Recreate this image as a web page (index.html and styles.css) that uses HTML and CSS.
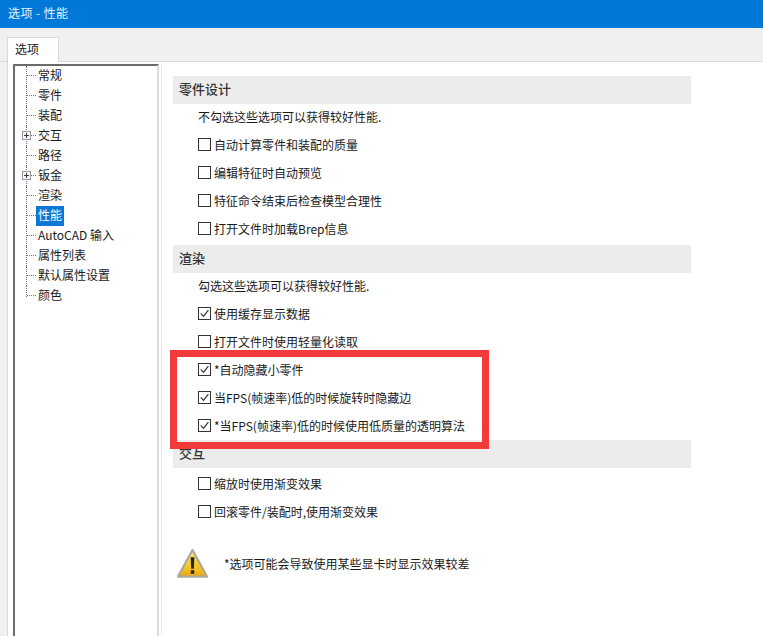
FILE: index.html
```html
<!DOCTYPE html>
<html lang="zh-CN">
<head>
    <meta charset="UTF-8">
    <title>选项 - 性能</title>
    <link rel="stylesheet" href="styles.css">
</head>
<body>
    <div class="titlebar">选项 - 性能</div>

    <div class="tab-strip">
        <div class="tab">选项</div>
    </div>

    <div class="tab-body">
        <!-- Tree -->
        <div class="tree">
            <div class="tree-lines">
                <div class="tree-item"><span class="twig"></span><span class="tree-label">常规</span></div>
                <div class="tree-item"><span class="twig"></span><span class="tree-label">零件</span></div>
                <div class="tree-item"><span class="twig"></span><span class="tree-label">装配</span></div>
                <div class="tree-item"><span class="twig"></span><span class="plus"></span><span class="tree-label">交互</span></div>
                <div class="tree-item"><span class="twig"></span><span class="tree-label">路径</span></div>
                <div class="tree-item"><span class="twig"></span><span class="plus"></span><span class="tree-label">钣金</span></div>
                <div class="tree-item"><span class="twig"></span><span class="tree-label">渲染</span></div>
                <div class="tree-item"><span class="twig"></span><span class="tree-label selected">性能</span></div>
                <div class="tree-item"><span class="twig"></span><span class="tree-label">AutoCAD 输入</span></div>
                <div class="tree-item"><span class="twig"></span><span class="tree-label">属性列表</span></div>
                <div class="tree-item"><span class="twig"></span><span class="tree-label">默认属性设置</span></div>
                <div class="tree-item last"><span class="twig"></span><span class="tree-label">颜色</span></div>
            </div>
        </div>

        <!-- Options -->
        <div class="options">
            <div class="section-head">零件设计</div>
            <div class="desc">不勾选这些选项可以获得较好性能.</div>
            <div class="check-row"><span class="box"></span>自动计算零件和装配的质量</div>
            <div class="check-row"><span class="box"></span>编辑特征时自动预览</div>
            <div class="check-row"><span class="box"></span>特征命令结束后检查模型合理性</div>
            <div class="check-row"><span class="box"></span>打开文件时加载Brep信息</div>

            <div class="section-head render-head">渲染</div>
            <div class="desc">勾选这些选项可以获得较好性能.</div>
            <div class="check-row"><span class="box"><svg viewBox="0 0 11 11"><path d="M1.8 5.4 4.5 8.4 9.4 2.2"/></svg></span>使用缓存显示数据</div>
            <div class="check-row"><span class="box"></span>打开文件时使用轻量化读取</div>
            <div class="check-row"><span class="box"><svg viewBox="0 0 11 11"><path d="M1.8 5.4 4.5 8.4 9.4 2.2"/></svg></span>*自动隐藏小零件</div>
            <div class="check-row"><span class="box"><svg viewBox="0 0 11 11"><path d="M1.8 5.4 4.5 8.4 9.4 2.2"/></svg></span>当FPS(帧速率)低的时候旋转时隐藏边</div>
            <div class="check-row"><span class="box"><svg viewBox="0 0 11 11"><path d="M1.8 5.4 4.5 8.4 9.4 2.2"/></svg></span>*当FPS(帧速率)低的时候使用低质量的透明算法</div>

            <div class="section-head interact-head">交互</div>
            <div class="check-row first"><span class="box"></span>缩放时使用渐变效果</div>
            <div class="check-row"><span class="box"></span>回滚零件/装配时,使用渐变效果</div>

            <div class="warning">
                <svg class="warn-icon" viewBox="0 0 32 32">
                    <defs>
                        <linearGradient id="warn-fill" x1="0" y1="0" x2="0" y2="1">
                            <stop offset="0" stop-color="#f7ee9a"/>
                            <stop offset="0.5" stop-color="#f6cf2e"/>
                            <stop offset="1" stop-color="#eda60c"/>
                        </linearGradient>
                    </defs>
                    <path d="M16 2 31 29.5H1Z" fill="url(#warn-fill)" stroke="#a9a9a0" stroke-width="2.2" stroke-linejoin="round"/>
                    <path d="M14 9.5h4l-.7 12h-2.6Z" fill="#2a2418"/>
                    <rect x="14.2" y="23" width="3.6" height="3.6" fill="#2a2418"/>
                </svg>
                <span>*选项可能会导致使用某些显卡时显示效果较差</span>
            </div>

            <div class="highlight"></div>
        </div>
    </div>
</body>
</html>
```
FILE: styles.css
```css
html, body {
    margin: 0;
    padding: 0;
    height: 100%;
}

body {
    width: 763px;
    height: 636px;
    overflow: hidden;
    background-color: #f0f0f0;
    font-family: "Noto Sans CJK SC", "Liberation Sans", sans-serif;
    font-size: 12px;
    color: #1a1a1a;
}

.titlebar {
    height: 28px;
    line-height: 26px;
    padding-left: 8px;
    background-color: #0078d7;
    color: #e8f3fc;
    font-size: 12px;
    letter-spacing: 0.4px;
    box-sizing: border-box;
}

.tab-strip {
    height: 34px;
    box-sizing: border-box;
    padding: 9px 0 0 7px;
    border-bottom: 1px solid #d9d9d9;
}

.tab {
    width: 52px;
    height: 25px;
    box-sizing: border-box;
    padding: 2px 0 0 7px;
    background: #fff;
    border: 1px solid #d9d9d9;
    border-bottom: none;
    font-size: 12px;
}

.tab-body {
    margin-left: 7px;
    height: 574px;
    padding: 2px 0 0 5px;
    box-sizing: border-box;
    background: #fff;
    border-left: 1px solid #d9d9d9;
    display: flex;
    gap: 2px;
}

.tree {
    width: 146px;
    box-sizing: border-box;
    border-top: 2px solid #6b6b6b;
    border-left: 2px solid #6b6b6b;
    border-right: 2px solid #dcdcdc;
}

.tree-lines {
    margin-left: 11px;
}

.tree-item {
    height: 20px;
    display: flex;
    align-items: center;
    position: relative;
}

.twig {
    width: 10px;
    height: 20px;
    box-sizing: border-box;
    border-left: 1px dotted #777;
    position: relative;
}

.twig::after {
    content: "";
    position: absolute;
    left: 0;
    right: 0;
    top: 9px;
    border-top: 1px dotted #777;
}

.tree-item.last .twig {
    height: 11px;
    margin-bottom: 9px;
}

.plus {
    position: absolute;
    left: -4px;
    top: 5px;
    width: 9px;
    height: 9px;
    box-sizing: border-box;
    border: 1px solid #9a9aa6;
    background: linear-gradient(#3c3c3c, #3c3c3c) center / 5px 1px no-repeat,
                linear-gradient(#3c3c3c, #3c3c3c) center / 1px 5px no-repeat,
                #f4f4f6;
}

.tree-label {
    height: 20px;
    line-height: 18px;
    padding: 0 2px;
    white-space: nowrap;
}

.tree-label.selected {
    background-color: #0a78d4;
    color: #fff;
}

.options {
    flex: 1;
    position: relative;
    border-left: 1px solid #ececec;
    padding: 12px 72px 0 11px;
}

.section-head {
    height: 28px;
    line-height: 26px;
    padding-left: 6px;
    background-color: #ececec;
    font-size: 13px;
    font-weight: 500;
    color: #333;
}

.render-head {
    margin-top: 3px;
}

.interact-head {
    margin-top: 1px;
}

.desc {
    height: 26px;
    line-height: 26px;
    padding-left: 25px;
}

.check-row {
    height: 28px;
    padding-left: 25px;
    display: flex;
    align-items: center;
    white-space: nowrap;
}

.check-row.first {
    margin-top: 1px;
}

.box {
    width: 13px;
    height: 13px;
    margin-right: 3px;
    flex: none;
    box-sizing: border-box;
    border: 1px solid #333;
    background: #fff;
    display: block;
}

.box svg {
    display: block;
    width: 11px;
    height: 11px;
    fill: none;
    stroke: #333;
    stroke-width: 1.2;
}

.warning {
    margin-top: 23px;
    margin-left: 4px;
    display: flex;
    align-items: center;
    gap: 16px;
}

.warn-icon {
    width: 31px;
    height: 31px;
    flex: none;
}

.highlight {
    position: absolute;
    left: 8px;
    top: 286px;
    width: 319px;
    height: 99px;
    box-sizing: border-box;
    border: 7px solid #f23a3a;
}
```
